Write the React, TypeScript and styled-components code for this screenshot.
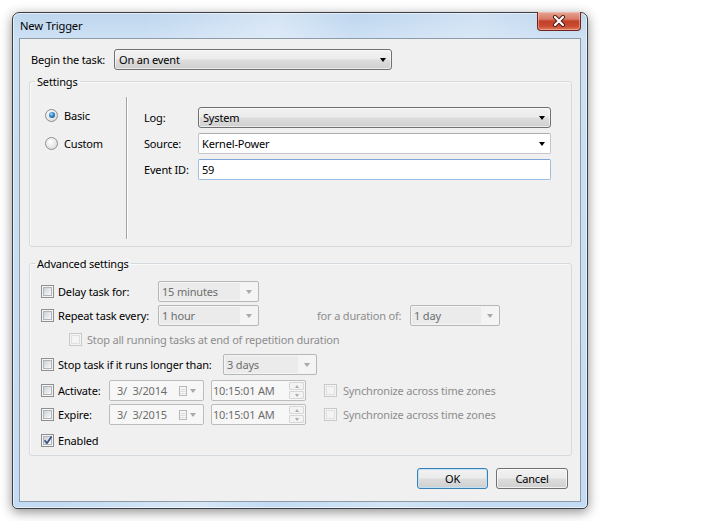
import React from "react";
import styled, { createGlobalStyle } from "styled-components";

const Global = createGlobalStyle`
  html, body { margin: 0; padding: 0; background: #ffffff; }
  body {
    font-family: "Noto Sans", "Open Sans", "Liberation Sans", sans-serif;
    font-size: 11px;
    letter-spacing: -0.17px;
    color: #000;
  }
  * { box-sizing: border-box; }
`;

const Desktop = styled.div`
  width: 718px;
  height: 521px;
  padding: 12px 0 0 12px;
  background: #fff;
  overflow: hidden;
`;

const Window = styled.div`
  width: 576px;
  height: 497px;
  border: 1px solid #3b3f45;
  border-radius: 7px 7px 5px 5px;
  background:
    linear-gradient(100deg, rgba(255,255,255,0) 20%, rgba(255,255,255,0.35) 40%, rgba(255,255,255,0) 52%, rgba(255,255,255,0.25) 70%, rgba(255,255,255,0) 85%),
    linear-gradient(to bottom, #bed6ee 0px, #cde0f4 25px, #c3dbf3 100%);
  box-shadow: 0 3px 12px rgba(0, 0, 0, 0.45), inset 0 0 0 1px rgba(255, 255, 255, 0.55);
  display: flex;
  flex-direction: column;
`;

const TitleBar = styled.div`
  height: 25px;
  flex: none;
  display: flex;
  justify-content: space-between;
  align-items: flex-start;
  padding: 0 6px 0 7px;
`;

const Title = styled.div`
  font-size: 11.2px;
  line-height: 25px;
  letter-spacing: -0.15px;
  color: #000;
`;

const CloseButton = styled.div`
  width: 44px;
  height: 19px;
  margin-top: -1px;
  border: 1px solid #6e2419;
  border-top: none;
  border-radius: 0 0 4px 4px;
  background: linear-gradient(to bottom, #e8a493 0%, #d77a66 40%, #c3402a 50%, #c94a31 78%, #df7b60 100%);
  box-shadow: inset 0 0 0 1px rgba(255, 210, 200, 0.45);
  display: flex;
  align-items: center;
  justify-content: center;
`;

const Client = styled.div`
  margin: 0 6px;
  height: 464px;
  flex: none;
  border: 1px solid #8d9aa8;
  background: #f0f0f0;
  padding: 10px 8px 0 9px;
  display: flex;
  flex-direction: column;
`;

const TaskRow = styled.div`
  display: flex;
  align-items: center;
  height: 21px;
  padding-left: 2px;
`;

const Label = styled.span<{ w?: number; dim?: boolean }>`
  flex: none;
  width: ${(p) => (p.w ? `${p.w}px` : "auto")};
  color: ${(p) => (p.dim ? "#8d8d8d" : "#000")};
  white-space: nowrap;
`;

const Combo = styled.div<{ w: number }>`
  width: ${(p) => p.w}px;
  height: 21px;
  flex: none;
  border: 1px solid #707070;
  border-radius: 3px;
  background: linear-gradient(to bottom, #f2f2f2 0%, #ebebeb 48%, #dddddd 52%, #cfcfcf 100%);
  box-shadow: inset 0 0 0 1px rgba(255, 255, 255, 0.6);
  display: flex;
  align-items: center;
  padding: 0 0 0 4px;
`;

const ComboText = styled.span`
  flex: 1;
  white-space: nowrap;
`;

const ArrowCell = styled.span<{ w?: number }>`
  width: ${(p) => p.w ?? 17}px;
  flex: none;
  display: flex;
  align-items: center;
  justify-content: center;
`;

const Arrow = styled.span<{ dim?: boolean }>`
  width: 0;
  height: 0;
  border-left: 3.5px solid transparent;
  border-right: 3.5px solid transparent;
  border-top: 4px solid ${(p) => (p.dim ? "#a9a9a9" : "#000")};
`;

const TextField = styled.div<{ focus?: boolean }>`
  height: 21px;
  border: 1px solid ${(p) => (p.focus ? "#9dbfe3" : "#c3c6cb")};
  border-top-color: ${(p) => (p.focus ? "#7ea9d6" : "#abadb3")};
  border-radius: 2px;
  background: #fff;
  display: flex;
  align-items: center;
  padding-left: 3px;
`;

const Group = styled.fieldset<{ mt: number }>`
  margin: ${(p) => p.mt}px 0 0 0;
  padding: 0;
  min-width: 0;
  border: 1px solid #d5dadf;
  border-radius: 3px;
  box-shadow: inset 1px 1px 0 #fafafa;
`;

const Legend = styled.legend`
  margin-left: 5px;
  padding: 0 2px;
  font-size: 11px;
  line-height: 15px;
`;

const SettingsBody = styled.div`
  height: 157px;
  display: flex;
  padding: 8px 0 7px 0;
`;

const ModeColumn = styled.div`
  width: 96px;
  flex: none;
  padding: 8px 0 0 15px;
  display: flex;
  flex-direction: column;
  gap: 8px;
`;

const RadioRow = styled.label`
  display: flex;
  align-items: center;
  gap: 6px;
  height: 20px;
`;

const RadioCircle = styled.span<{ checked?: boolean }>`
  width: 13px;
  height: 13px;
  flex: none;
  border-radius: 50%;
  border: 1px solid #8e8f8f;
  background: radial-gradient(circle at 40% 35%, #ffffff 0%, #eeeeee 40%, #cfd1d4 100%);
  display: flex;
  align-items: center;
  justify-content: center;
  &::after {
    content: "";
    display: ${(p) => (p.checked ? "block" : "none")};
    width: 6px;
    height: 6px;
    border-radius: 50%;
    background: radial-gradient(circle at 40% 35%, #9fdcff 0%, #2f86c8 45%, #0f3f74 100%);
  }
`;

const Divider = styled.div`
  width: 1px;
  flex: none;
  background: #a3a3a3;
  box-shadow: 1px 0 0 #ffffff;
`;

const FieldGrid = styled.div`
  flex: 1;
  padding: 10px 20px 0 17px;
  display: grid;
  grid-template-columns: 54px 1fr;
  grid-auto-rows: 21px;
  row-gap: 5px;
  align-items: center;
`;

const AdvancedBody = styled.div`
  height: 184px;
  padding: 10px 0 0 11px;
  display: flex;
  flex-direction: column;
`;

const OptRow = styled.div<{ mt: number; indent?: number }>`
  display: flex;
  align-items: center;
  height: 21px;
  margin-top: ${(p) => p.mt}px;
  padding-left: ${(p) => p.indent ?? 0}px;
`;

const CheckOuter = styled.span<{ disabled?: boolean; gap?: number }>`
  width: 13px;
  height: 13px;
  flex: none;
  margin-right: ${(p) => p.gap ?? 4}px;
  border: 1px solid ${(p) => (p.disabled ? "#c8c9ca" : "#8e8f8f")};
  background: #f4f4f4;
  padding: 1px;
  position: relative;
`;

const CheckInner = styled.span<{ disabled?: boolean }>`
  display: block;
  width: 100%;
  height: 100%;
  border: 1px solid ${(p) => (p.disabled ? "#e0e0e0" : "#b1b5ba")};
  background: ${(p) =>
    p.disabled ? "#f4f4f4" : "linear-gradient(135deg, #cbcfd5 0%, #e6e8eb 55%, #f8f8f8 100%)"};
`;

const CheckMark = styled.svg`
  position: absolute;
  left: 0;
  top: -1px;
`;

const DimCombo = styled.div<{ w: number }>`
  width: ${(p) => p.w}px;
  height: 21px;
  flex: none;
  border: 1px solid #b4b8bb;
  border-radius: 2px;
  background: #f4f4f4;
  display: flex;
  align-items: stretch;
  padding: 1px 0 1px 1px;
  color: #6d6d6d;
`;

const DimComboText = styled.span`
  flex: 1;
  background: #ebebeb;
  display: flex;
  align-items: center;
  padding-left: 2px;
  white-space: nowrap;
`;

const DimText = styled.span<{ ml?: number; w?: number }>`
  flex: none;
  margin-left: ${(p) => p.ml ?? 0}px;
  width: ${(p) => (p.w ? `${p.w}px` : "auto")};
  color: #8d8d8d;
  white-space: nowrap;
`;

const PickerBox = styled.div<{ w: number; ml?: number }>`
  width: ${(p) => p.w}px;
  height: 21px;
  flex: none;
  margin-left: ${(p) => p.ml ?? 0}px;
  margin-right: ${(p) => (p.ml ? 18 : 0)}px;
  border: 1px solid #bcbcbc;
  border-radius: 2px;
  background: #f7f7f7;
  display: flex;
  align-items: center;
  color: #6d6d6d;
`;

const PickerText = styled.span<{ pl: number }>`
  flex: 1;
  padding-left: ${(p) => p.pl}px;
  white-space: pre;
`;

const CalendarCell = styled.span`
  flex: none;
  width: 24px;
  display: flex;
  align-items: center;
  gap: 3px;
`;

const Spin = styled.span`
  flex: none;
  width: 15px;
  height: 17px;
  margin-right: 1px;
  display: flex;
  flex-direction: column;
  gap: 1px;
`;

const SpinHalf = styled.span`
  flex: 1;
  border: 1px solid #d6d6d6;
  border-radius: 1px;
  background: #f3f3f3;
  display: flex;
  align-items: center;
  justify-content: center;
`;

const TinyTri = styled.span<{ up?: boolean }>`
  width: 0;
  height: 0;
  border-left: 2.5px solid transparent;
  border-right: 2.5px solid transparent;
  ${(p) => (p.up ? "border-bottom: 3px solid #adadad;" : "border-top: 3px solid #adadad;")}
`;

const ButtonRow = styled.div`
  margin-top: 12px;
  padding-right: 4px;
  display: flex;
  justify-content: flex-end;
  gap: 8px;
`;

const Button = styled.button<{ w: number; isDefault?: boolean }>`
  width: ${(p) => p.w}px;
  height: 21px;
  border: 1px solid ${(p) => (p.isDefault ? "#3c7fb1" : "#707070")};
  border-radius: 3px;
  background: linear-gradient(to bottom, #f2f2f2 0%, #ebebeb 48%, #dddddd 52%, #cfcfcf 100%);
  box-shadow: inset 0 0 0 1px ${(p) => (p.isDefault ? "#bfe4f9" : "rgba(255,255,255,0.7)")};
  font-family: inherit;
  font-size: 11px;
  letter-spacing: -0.17px;
  color: #000;
  padding: 0;
`;

function Check({ disabled, checked, gap }: { disabled?: boolean; checked?: boolean; gap?: number }) {
  return (
    <CheckOuter disabled={disabled} gap={gap}>
      <CheckInner disabled={disabled} />
      {checked && (
        <CheckMark width="12" height="12" viewBox="0 0 12 12">
          <path d="M2.6 6.2 L4.9 9.2 L9.6 2.4" fill="none" stroke="#34507f" strokeWidth="1.7" strokeLinejoin="round" />
        </CheckMark>
      )}
    </CheckOuter>
  );
}

function Disabled({ w, text }: { w: number; text: string }) {
  return (
    <DimCombo w={w}>
      <DimComboText>{text}</DimComboText>
      <ArrowCell w={18}>
        <Arrow dim />
      </ArrowCell>
    </DimCombo>
  );
}

function CalendarIcon() {
  return (
    <svg width="8" height="10" viewBox="0 0 8 10">
      <rect x="0.5" y="0.5" width="7" height="9" fill="#f6f6f6" stroke="#b9b9b9" />
      <path d="M1.5 3.5h5M1.5 5.5h5M1.5 7.5h5" stroke="#dcdcdc" />
    </svg>
  );
}

function DateTime({ date }: { date: string }) {
  return (
    <>
      <PickerBox w={95}>
        <PickerText pl={7}>{date}</PickerText>
        <CalendarCell>
          <CalendarIcon />
          <Arrow dim />
        </CalendarCell>
      </PickerBox>
      <PickerBox w={95} ml={7}>
        <PickerText pl={1}>10:15:01 AM</PickerText>
        <Spin>
          <SpinHalf>
            <TinyTri up />
          </SpinHalf>
          <SpinHalf>
            <TinyTri />
          </SpinHalf>
        </Spin>
      </PickerBox>
    </>
  );
}

export default function App() {
  return (
    <>
      <Global />
      <Desktop>
        <Window>
          <TitleBar>
            <Title>New Trigger</Title>
            <CloseButton>
              <svg width="14" height="12" viewBox="0 0 14 12">
                <path d="M3 2 L11 10 M11 2 L3 10" stroke="#4a1a12" strokeWidth="4" strokeLinecap="round" />
                <path d="M3 2 L11 10 M11 2 L3 10" stroke="#ffffff" strokeWidth="2.2" strokeLinecap="round" />
              </svg>
            </CloseButton>
          </TitleBar>
          <Client>
            <TaskRow>
              <Label w={83}>Begin the task:</Label>
              <Combo w={278}>
                <ComboText>On an event</ComboText>
                <ArrowCell>
                  <Arrow />
                </ArrowCell>
              </Combo>
            </TaskRow>

            <Group mt={4}>
              <Legend>Settings</Legend>
              <SettingsBody>
                <ModeColumn>
                  <RadioRow>
                    <RadioCircle checked />
                    Basic
                  </RadioRow>
                  <RadioRow>
                    <RadioCircle />
                    Custom
                  </RadioRow>
                </ModeColumn>
                <Divider />
                <FieldGrid>
                  <Label>Log:</Label>
                  <Combo w={353}>
                    <ComboText>System</ComboText>
                    <ArrowCell>
                      <Arrow />
                    </ArrowCell>
                  </Combo>
                  <Label>Source:</Label>
                  <TextField>
                    <ComboText>Kernel-Power</ComboText>
                    <ArrowCell>
                      <Arrow />
                    </ArrowCell>
                  </TextField>
                  <Label>Event ID:</Label>
                  <TextField focus>
                    <ComboText>59</ComboText>
                  </TextField>
                </FieldGrid>
              </SettingsBody>
            </Group>

            <Group mt={9}>
              <Legend>Advanced settings</Legend>
              <AdvancedBody>
                <OptRow mt={0}>
                  <Check />
                  <Label w={100}>Delay task for:</Label>
                  <Disabled w={101} text="15 minutes" />
                </OptRow>
                <OptRow mt={3}>
                  <Check />
                  <Label w={100}>Repeat task every:</Label>
                  <Disabled w={101} text="1 hour" />
                  <DimText ml={58} w={93}>for a duration of:</DimText>
                  <Disabled w={90} text="1 day" />
                </OptRow>
                <OptRow mt={3} indent={28}>
                  <Check disabled gap={5} />
                  <DimText>Stop all running tasks at end of repetition duration</DimText>
                </OptRow>
                <OptRow mt={4}>
                  <Check />
                  <Label w={165}>Stop task if it runs longer than:</Label>
                  <Disabled w={94} text="3 days" />
                </OptRow>
                <OptRow mt={5}>
                  <Check />
                  <Label w={51}>Activate:</Label>
                  <DateTime date="3/  3/2014" />
                  <Check disabled gap={6} />
                  <DimText>Synchronize across time zones</DimText>
                </OptRow>
                <OptRow mt={3}>
                  <Check />
                  <Label w={51}>Expire:</Label>
                  <DateTime date="3/  3/2015" />
                  <Check disabled gap={6} />
                  <DimText>Synchronize across time zones</DimText>
                </OptRow>
                <OptRow mt={5}>
                  <Check checked />
                  <Label>Enabled</Label>
                </OptRow>
              </AdvancedBody>
            </Group>

            <ButtonRow>
              <Button w={71} isDefault>OK</Button>
              <Button w={72}>Cancel</Button>
            </ButtonRow>
          </Client>
        </Window>
      </Desktop>
    </>
  );
}
